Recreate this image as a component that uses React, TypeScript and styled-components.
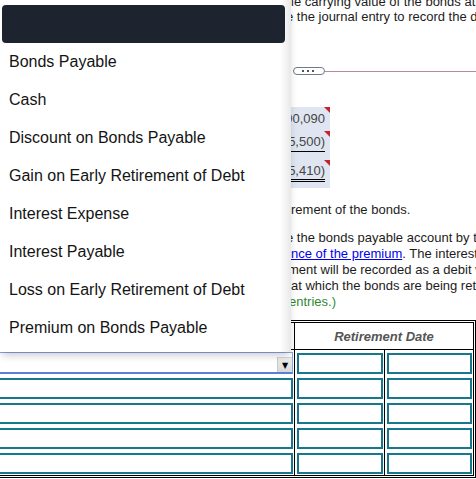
import styled, { createGlobalStyle } from "styled-components";

const GlobalStyle = createGlobalStyle`
  html, body {
    margin: 0;
    padding: 0;
    background: #fff;
  }
  body {
    font-family: "Liberation Sans", Arial, sans-serif;
  }
`;

const accounts = [
  "",
  "Bonds Payable",
  "Cash",
  "Discount on Bonds Payable",
  "Gain on Early Retirement of Debt",
  "Interest Expense",
  "Interest Payable",
  "Loss on Early Retirement of Debt",
  "Premium on Bonds Payable",
];

const amounts = [
  { value: "190,090", line: "none", pad: 4, height: 24 },
  { value: "(15,500)", line: "single", pad: 3, height: 29 },
  { value: "(15,410)", line: "double", pad: 3, height: 28 },
] as const;

export default function App() {
  return (
    <>
      <GlobalStyle />
      <Page>
        <Doc>
          <Notes>
            <Intro>
              <Line>le carrying value of the bonds at the date of retirement.</Line>
              <Line $indent={-5}>e the journal entry to record the disposition of the bonds.</Line>
            </Intro>
            <DividerRow>
              <Pill>
                <Dot />
                <Dot />
                <Dot />
              </Pill>
              <Rule />
            </DividerRow>
            <AmountBox>
              {amounts.map((a) => (
                <AmountCell key={a.value} $height={a.height} $pad={a.pad}>
                  <Amount $line={a.line}>{a.value}</Amount>
                  <Flag />
                </AmountCell>
              ))}
            </AmountBox>
            <Remark>rement of the bonds.</Remark>
            <Para>
              <Line $indent={-5}>e the bonds payable account by the amount shown.</Line>
              <Line>
                <Link>nce of the premium</Link>. The interest expense for the period
              </Line>
              <Line $indent={-3}>ment will be recorded as a debit with the amount</Line>
              <Line>at which the bonds are being retired from the market.</Line>
              <Line $indent={-2}>
                <Hint>entries.)</Hint>
              </Line>
            </Para>
          </Notes>

          <Table>
            <Grid>
              <HeadBlank />
              <HeadCell>Retirement Date</HeadCell>
              {[0, 1, 2, 3, 4].map((row) => (
                <Row key={row}>
                  <Cell $pad={row === 0 ? 2 : 3}>
                    {row === 0 ? (
                      <Select>
                        <Arrow>▼</Arrow>
                      </Select>
                    ) : (
                      <Input />
                    )}
                  </Cell>
                  <Cell $border>
                    <Input />
                  </Cell>
                  <Cell $border>
                    <Input />
                  </Cell>
                </Row>
              ))}
            </Grid>
          </Table>
        </Doc>

        <Menu>
          {accounts.map((name, i) => (
            <MenuItem key={name || "blank"} $active={i === 0}>
              {name}
            </MenuItem>
          ))}
        </Menu>
      </Page>
    </>
  );
}

const Page = styled.div`
  position: relative;
  width: 476px;
  height: 479px;
  overflow: hidden;
  font-size: 13px;
  color: #1c1c1c;
`;

const Doc = styled.div`
  display: flex;
  flex-direction: column;
`;

const Notes = styled.div`
  display: flex;
  flex-direction: column;
  margin-left: 291px;
  overflow: hidden;
`;

const Intro = styled.div`
  margin-top: -6px;
  line-height: 15px;
`;

const Line = styled.div<{ $indent?: number }>`
  white-space: nowrap;
  text-indent: ${(p) => p.$indent ?? 0}px;
`;

const DividerRow = styled.div`
  display: flex;
  align-items: center;
  margin-top: 43px;
`;

const Pill = styled.div`
  display: flex;
  align-items: center;
  justify-content: center;
  gap: 3px;
  box-sizing: border-box;
  width: 32px;
  height: 8px;
  margin-left: 2px;
  padding-right: 2px;
  border: 1px solid #6d7a88;
  border-radius: 4px;
  background: #fff;
`;

const Dot = styled.span`
  width: 2px;
  height: 2px;
  background: #4a5560;
`;

const Rule = styled.div`
  flex: 1;
  height: 1px;
  background: #b8899a;
`;

const AmountBox = styled.div`
  width: 39px;
  margin-top: 32px;
  background: #dfe6f1;
`;

const AmountCell = styled.div<{ $height: number; $pad: number }>`
  position: relative;
  display: flex;
  justify-content: flex-end;
  align-items: flex-start;
  box-sizing: border-box;
  height: ${(p) => p.$height}px;
  padding: ${(p) => p.$pad}px 5px 0 0;
  white-space: nowrap;
`;

const Amount = styled.span<{ $line: "none" | "single" | "double" }>`
  flex: none;
  display: block;
  line-height: 15px;
  color: #454545;
  padding-bottom: ${(p) => (p.$line === "single" ? 2 : p.$line === "double" ? 1 : 0)}px;
  border-bottom: ${(p) =>
    p.$line === "single" ? "1px solid #000" : p.$line === "double" ? "3px double #000" : "none"};
`;

const Flag = styled.span`
  position: absolute;
  top: 0;
  right: 0;
  width: 0;
  height: 0;
  border-top: 6px solid #c8232c;
  border-left: 6px solid transparent;
`;

const Remark = styled.div`
  margin-top: 14px;
  line-height: 16px;
  white-space: nowrap;
`;

const Para = styled.div`
  margin-top: 12px;
  line-height: 16px;
`;

const Link = styled.span`
  color: #0000ee;
  text-decoration: underline;
`;

const Hint = styled.span`
  color: #2f8a2f;
`;

const Table = styled.div`
  box-sizing: border-box;
  width: 496px;
  margin: 10px 0 0 -20px;
  padding: 1px;
  border: 1px solid #000;
`;

const Grid = styled.div`
  display: grid;
  grid-template-columns: 1fr 90px 89px;
  border: 1px solid #000;
`;

const HeadBlank = styled.div`
  height: 27px;
  box-sizing: border-box;
  border-bottom: 1px solid #000;
`;

const HeadCell = styled.div`
  grid-column: span 2;
  display: flex;
  align-items: center;
  justify-content: center;
  box-sizing: border-box;
  height: 27px;
  border-left: 1px solid #000;
  border-bottom: 1px solid #000;
  font-weight: bold;
  font-style: italic;
  color: #555;
`;

const Row = styled.div`
  display: contents;
`;

const Cell = styled.div<{ $border?: boolean; $pad?: number }>`
  box-sizing: border-box;
  height: 25px;
  padding: ${(p) => p.$pad ?? 3}px 1px 1px 2px;
  border-left: ${(p) => (p.$border ? "1px solid #000" : "none")};
`;

const Input = styled.div`
  box-sizing: border-box;
  height: 21px;
  border: 2px solid #17788d;
  background: #fff;
`;

const Select = styled.div`
  display: flex;
  justify-content: flex-end;
  align-items: flex-end;
  box-sizing: border-box;
  height: 22px;
  border: 1px solid #8ba6e6;
  border-bottom: 2px solid #5c7fd6;
  background: #fff;
`;

const Arrow = styled.div`
  display: flex;
  align-items: center;
  justify-content: center;
  box-sizing: border-box;
  width: 15px;
  height: 15px;
  border-left: 1px solid #c8c8c8;
  border-top: 1px solid #d4d4d4;
  background: linear-gradient(#ededed, #d8d8d8);
  font-family: "DejaVu Sans", sans-serif;
  font-size: 8px;
  color: #000;
`;

const Menu = styled.div`
  position: absolute;
  top: 0;
  left: 0;
  z-index: 2;
  box-sizing: border-box;
  width: 291px;
  height: 352px;
  padding: 5px 6px 5px 2px;
  background: #fff;
  box-shadow: 0 5px 8px -2px rgba(0, 0, 0, 0.22);

  &::after {
    content: "";
    position: absolute;
    top: 0;
    right: 0;
    bottom: 0;
    width: 11px;
    background: linear-gradient(to right, rgba(0, 0, 0, 0), rgba(0, 0, 0, 0.09));
  }
`;

const MenuItem = styled.div<{ $active?: boolean }>`
  display: flex;
  align-items: center;
  height: 38px;
  padding-left: 7px;
  border-radius: 4px;
  background: ${(p) => (p.$active ? "#1e2330" : "transparent")};
  font-size: 16px;
  color: #141414;
  white-space: nowrap;
`;
